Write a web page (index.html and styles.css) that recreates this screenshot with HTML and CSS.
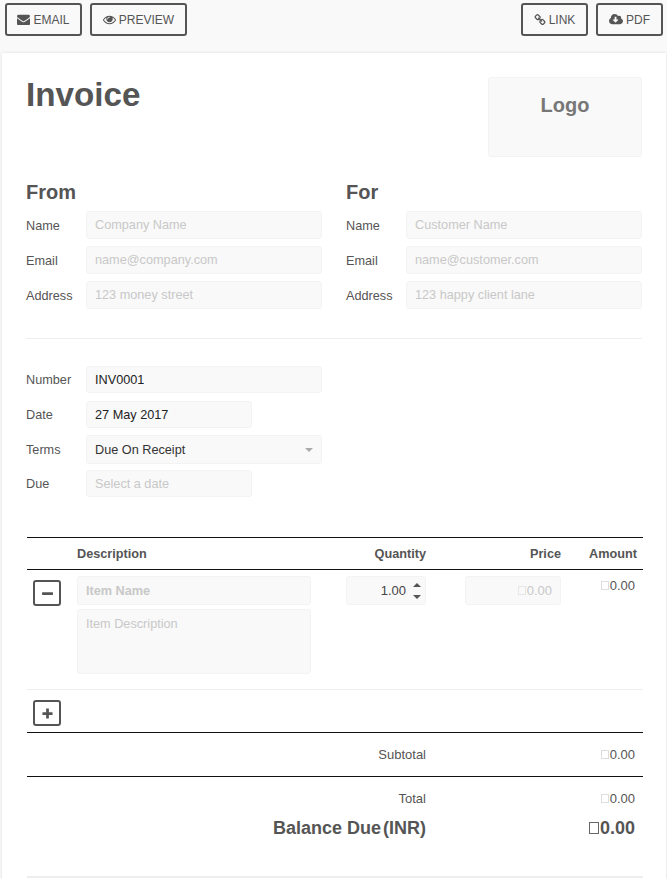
FILE: index.html
```html
<!DOCTYPE html>
<html lang="en">
<head>
<meta charset="utf-8">
<title>Invoice</title>
<link rel="stylesheet" href="styles.css">
</head>
<body>
<header class="toolbar">
  <div class="tool-group">
    <button class="btn btn-email"><svg class="ico" viewBox="0 0 1792 1792"><path d="M1792 710v794q0 66-47 113t-113 47H160q-66 0-113-47T0 1504V710q44 49 101 87 362 246 497 345 57 42 92.5 65.5t94.5 48 110 24.5h2q51 0 110-24.5t94.5-48 92.5-65.5q170-123 498-345 57-39 100-87zm0-294q0 79-49 151t-122 123q-376 261-468 325-10 7-42.5 30.5t-54 38-52 32.5-57.5 27-50 9h-2q-23 0-50-9t-57.5-27-52-32.5-54-38T639 1015q-91-64-262-182.5T172 690q-62-42-117-115.5T0 438q0-78 41.5-130T160 256h1472q65 0 112.5 47t47.5 113z"/></svg>EMAIL</button>
    <button class="btn btn-preview"><svg class="ico" viewBox="0 0 1792 1792"><path d="M1664 960q-152-236-381-353 61 104 61 225 0 185-131.5 316.5T896 1280t-316.5-131.5T448 832q0-121 61-225-229 117-381 353 133 205 333.5 326.5T896 1408t434.5-121.5T1664 960zM944 576q0-20-14-34t-34-14q-125 0-214.5 89.5T592 832q0 20 14 34t34 14 34-14 14-34q0-86 61-147t147-61q20 0 34-14t14-34zm848 384q0 34-20 69-140 230-376.5 368.5T896 1536t-499.5-139T20 1029Q0 994 0 960t20-69q140-229 376.5-368T896 384t499.5 139T1772 891q20 35 20 69z"/></svg>PREVIEW</button>
  </div>
  <div class="tool-group">
    <button class="btn btn-link"><svg class="ico ico-link" viewBox="0 0 1792 1792"><path d="M1520 1216q0-40-28-68l-208-208q-28-28-68-28-42 0-72 32 3 3 19 18.5t21.5 21.5 15 19 13 25.5 3.5 27.5q0 40-28 68t-68 28q-15 0-27.5-3.5t-25.5-13-19-15-21.5-21.5-18.5-19q-33 31-33 73 0 40 28 68l206 207q27 27 68 27 40 0 68-26l147-146q28-28 28-67zM817 511q0-40-28-68L583 236q-28-28-68-28-39 0-68 27L300 381q-28 28-28 67 0 40 28 68l208 208q27 27 68 27 42 0 72-31-3-3-19-18.5T607 680t-15-19-13-25.5-3.5-27.5q0-40 28-68t68-28q15 0 27.5 3.5t25.5 13 19 15 21.5 21.5 18.5 19q33-31 33-73zm895 705q0 120-85 203l-147 146q-83 83-203 83-121 0-204-85l-206-207q-83-83-83-203 0-123 88-209l-88-88q-86 88-208 88-120 0-204-84L164 652q-84-84-84-204t85-203L312 99q83-83 203-83 121 0 204 85l206 207q83 83 83 203 0 123-88 209l88 88q86-88 208-88 120 0 204 84l208 208q84 84 84 204z"/></svg>LINK</button>
    <button class="btn btn-pdf"><svg class="ico ico-wide" viewBox="0 0 1920 1792"><path d="M1280 928q0-14-9-23t-23-9h-224V544q0-13-9.5-22.5T992 512H800q-13 0-22.5 9.5T768 544v352H544q-14 0-23 9t-9 23q0 14 9 23l352 352q9 9 23 9t23-9l351-351q10-12 10-24zm640 224q0 159-112.5 271.5T1536 1536H448q-185 0-316.5-131.5T0 1088q0-130 70-240t188-165q-2-30-2-43 0-212 150-362t362-150q156 0 285.5 87T1242 427q71-62 166-62 106 0 181 75t75 181q0 76-41 138 130 31 213.5 135.5T1920 1152z"/></svg>PDF</button>
  </div>
</header>

<main class="card">
  <div class="top">
    <h1 class="title">Invoice</h1>
    <div class="logo">Logo</div>
  </div>

  <div class="parties">
    <section class="party">
      <h2 class="party-title">From</h2>
      <div class="row"><label class="lbl">Name</label><input class="field" placeholder="Company Name"></div>
      <div class="row"><label class="lbl">Email</label><input class="field" placeholder="name@company.com"></div>
      <div class="row"><label class="lbl">Address</label><input class="field" placeholder="123 money street"></div>
    </section>
    <section class="party">
      <h2 class="party-title">For</h2>
      <div class="row"><label class="lbl">Name</label><input class="field" placeholder="Customer Name"></div>
      <div class="row"><label class="lbl">Email</label><input class="field" placeholder="name@customer.com"></div>
      <div class="row"><label class="lbl">Address</label><input class="field" placeholder="123 happy client lane"></div>
    </section>
  </div>

  <hr class="divider">

  <section class="meta">
    <div class="meta-row"><label class="lbl">Number</label><input class="field field-h27" value="INV0001"></div>
    <div class="meta-row"><label class="lbl">Date</label><input class="field field-short field-h27" value="27 May 2017"></div>
    <div class="meta-row meta-row-select"><label class="lbl">Terms</label><div class="field select">Due On Receipt<span class="caret"></span></div></div>
    <div class="meta-row"><label class="lbl">Due</label><input class="field field-short field-h27" placeholder="Select a date"></div>
  </section>

  <section class="items">
    <div class="thead">
      <span class="th th-desc">Description</span>
      <span class="th th-qty">Quantity</span>
      <span class="th th-price">Price</span>
      <span class="th th-amount">Amount</span>
    </div>
    <div class="item">
      <button class="square square-minus"><svg class="sq-ico" viewBox="0 0 12 12"><rect x="0" y="4.5" width="12" height="3" rx="0.6"/></svg></button>
      <div class="item-desc">
        <input class="field field-name" placeholder="Item Name">
        <textarea class="field field-area" placeholder="Item Description"></textarea>
      </div>
      <div class="field qty">
        <span class="qty-val">1.00</span>
        <span class="spin"><span class="arr arr-up"></span><span class="arr arr-down"></span></span>
      </div>
      <div class="field price"><span class="tofu"></span>0.00</div>
      <div class="amount"><span class="tofu tofu-amt"></span>0.00</div>
    </div>
    <div class="add-row">
      <button class="square"><svg class="sq-ico" viewBox="0 0 12 12"><path d="M4.5 0.5h3v4h4v3h-4v4h-3v-4h-4v-3h4z"/></svg></button>
    </div>
    <div class="sum sum-sub">
      <span class="sum-label">Subtotal</span>
      <span class="sum-value"><span class="tofu tofu-amt"></span>0.00</span>
    </div>
    <div class="sum sum-total">
      <span class="sum-label">Total</span>
      <span class="sum-value"><span class="tofu tofu-amt"></span>0.00</span>
    </div>
    <div class="sum sum-due">
      <span class="sum-label">Balance Due <span class="due-unit">(INR)</span></span>
      <span class="sum-value"><span class="tofu tofu-big"></span>0.00</span>
    </div>
    <div class="end-line"></div>
  </section>
</main>
</body>
</html>
```

FILE: styles.css
```css
* { box-sizing: border-box; }
html, body { margin: 0; padding: 0; }
body {
  background: #f9f9f9;
  font-family: "Liberation Sans", Arial, sans-serif;
  font-size: 14px;
  color: #555;
  height: 879px;
  overflow: hidden;
}
.toolbar {
  display: flex;
  justify-content: space-between;
  padding: 3px 4px 0 5px;
  height: 53px;
}
.tool-group { display: flex; gap: 8px; }
.btn {
  height: 33px;
  border: 2px solid #555;
  border-radius: 3px;
  background: #f9f9f9;
  color: #555;
  font: 12px/1 "Liberation Sans", Arial, sans-serif;
  display: flex;
  align-items: center;
  justify-content: center;
  padding: 0;
}
.btn-email { width: 77px; }
.btn-preview { width: 97px; }
.btn-link, .btn-pdf { width: 67px; }
.ico { width: 13px; height: 13px; fill: #555; margin-right: 3px; flex: none; }
.ico-wide { width: 14px; }
.ico-link { width: 12px; height: 12px; }

.card {
  background: #fff;
  margin: 0 1px 0 2px;
  height: 826px;
  padding: 0 24px 0 24px;
  box-shadow: 0 0 3px rgba(0,0,0,.12);
}
.top {
  display: flex;
  justify-content: space-between;
  align-items: flex-start;
  padding-top: 24px;
  height: 128px;
}
.title { margin: 0; font-size: 33.2px; line-height: 36px; font-weight: 700; color: #555; }
.logo {
  width: 154px;
  height: 80px;
  background: #f9f9f9;
  border: 1px solid #f3f3f3;
  border-radius: 3px;
  text-align: center;
  font-size: 20px;
  font-weight: 700;
  color: #777;
  padding-top: 16px;
  line-height: 23px;
}
.parties { display: grid; grid-template-columns: 296px 296px; column-gap: 24px; }
.party-title { margin: 0; font-size: 20px; line-height: 22px; font-weight: 700; color: #555; height: 30px; }
.row { display: flex; align-items: center; height: 28px; margin-bottom: 7px; }
.row .lbl { padding-top: 2px; }
.lbl { width: 60px; flex: none; font-size: 12.7px; color: #555; }
.field {
  height: 28px;
  width: 236px;
  background: #f9f9f9;
  border: 1px solid #f3f3f3;
  border-radius: 3px;
  padding: 0 8px;
  font: 12.7px "Liberation Sans", Arial, sans-serif;
  color: #222;
  outline: none;
}
.field::placeholder { color: #c8c8c8; opacity: 1; }
.divider { border: 0; border-top: 1px solid #eee; margin: 22px 0 27px; }

.meta { display: flex; flex-direction: column; }
.meta-row { display: flex; align-items: center; margin-bottom: 8px; }
.meta-row-select { margin-top: -1px; margin-bottom: 6px; }
.field-h27 { height: 27px; }
.field-short { width: 166px; }
.select {
  height: 29px;
  display: flex;
  align-items: center;
  justify-content: space-between;
  color: #333;
}
.caret {
  width: 0; height: 0;
  border-left: 4px solid transparent;
  border-right: 4px solid transparent;
  border-top: 4px solid #aaa;
}
.items { margin: 32px 0 0 1px; width: 616px; }
.thead {
  display: grid;
  grid-template-columns: 50px 269px 80px 135px 82px;
  align-items: center;
  height: 33px;
  border-top: 1px solid #111;
  border-bottom: 1px solid #111;
  font-size: 12.7px;
  font-weight: 700;
  color: #555;
}
.th-desc { grid-column: 2; }
.th-qty { text-align: right; }
.th-price { text-align: right; }
.th-amount { text-align: right; padding-right: 6px; }
.item {
  display: grid;
  grid-template-columns: 50px 269px 80px 39px 96px 82px;
  align-items: start;
  height: 120px;
  padding-top: 6px;
  border-bottom: 1px solid #eee;
}
.square {
  width: 28px;
  height: 26px;
  border: 2px solid #555;
  border-radius: 3px;
  background: #fff;
  margin-left: 6px;
  padding: 0;
  display: flex;
  align-items: center;
  justify-content: center;
}
.square-minus { margin-top: 4px; }
.sq-ico { width: 11px; height: 11px; fill: #555; }
.item-desc { display: flex; flex-direction: column; gap: 4px; }
.field-name { width: 234px; height: 29px; font-weight: 700; }
.field-area { width: 234px; height: 65px; resize: none; display: block; padding-top: 7px; }
.qty {
  grid-column: 3;
  width: 80px;
  height: 29px;
  display: flex;
  align-items: center;
  justify-content: flex-end;
  padding: 0 4px 0 0;
  color: #444;
}
.qty-val { margin-right: 7px; font-size: 13px; color: #444; }
.spin { display: flex; flex-direction: column; gap: 8px; }
.arr { width: 0; height: 0; border-left: 4px solid transparent; border-right: 4px solid transparent; }
.arr-up { border-bottom: 4px solid #555; }
.arr-down { border-top: 4px solid #555; }
.price {
  grid-column: 5;
  width: 96px;
  height: 29px;
  display: flex;
  align-items: center;
  justify-content: flex-end;
  color: #c8c8c8;
  font-size: 13px;
}
.amount { grid-column: 6; text-align: right; padding: 1px 8px 0 0; font-size: 13px; color: #555; line-height: 18px; }
.tofu {
  display: inline-block;
  width: 8px;
  height: 9px;
  border: 1px solid #e6e6e6;
  margin-right: 1px;
}
.tofu-amt { border-color: #ddd; }
.tofu-big { width: 10px; height: 12px; border-color: #666; margin-right: 1px; }
.add-row {
  height: 43px;
  padding-top: 10px;
  border-bottom: 1px solid #111;
}
.sum { display: grid; grid-template-columns: 399px 209px; align-items: center; }
.sum-label { text-align: right; font-size: 13px; color: #555; }
.sum-value { text-align: right; font-size: 13px; color: #555; }
.sum-sub { height: 44px; border-bottom: 1px solid #111; }
.sum-total { height: 42px; padding-top: 1px; }
.sum-due { height: 17px; margin-top: -1px; }
.sum-due .sum-label { font-size: 18px; font-weight: 700; white-space: nowrap; }
.due-unit { margin-left: -3px; }
.sum-due .sum-value { font-size: 18px; font-weight: 700; }
.end-line { margin-top: 41px; height: 2px; background: #eee; }
```
